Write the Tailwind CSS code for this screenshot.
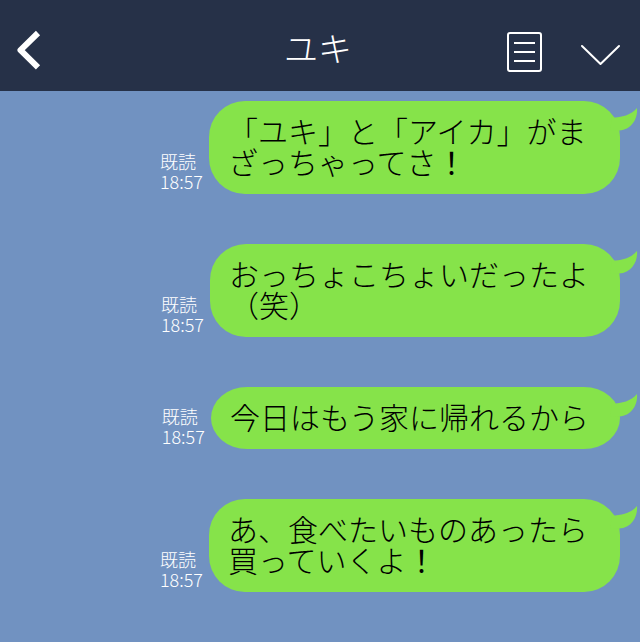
<!DOCTYPE html>
<html lang="ja" class="h-full">
<head>
  <meta charset="UTF-8" />
  <meta name="viewport" content="width=device-width, initial-scale=1.0"/>
  <title>ユキ</title>

  <script src="https://cdn.jsdelivr.net/npm/@tailwindcss/browser@4"></script>
</head>
<body class="min-h-full flex flex-col bg-[#7192c1] font-['Noto_Sans_CJK_JP',sans-serif] font-light">
  <!-- Header -->
  <header class="h-[91px] shrink-0 bg-[#263148] text-white grid grid-cols-[1fr_auto_1fr] items-center pt-2 pl-4 pr-5">
    <button type="button" aria-label="戻る" class="justify-self-start">
      <svg class="w-7 h-10" viewBox="0 0 28 40" fill="none" stroke="currentColor" stroke-width="6">
        <path d="M22 3 L4.500 20.200 L22 37.400" stroke-linejoin="round"/>
      </svg>
    </button>
    <h1 class="text-[34px] leading-10 pb-1 font-light">ユキ</h1>
    <div class="justify-self-end flex items-center gap-[38px]">
      <button type="button" aria-label="ノート">
        <svg class="w-9 h-11" viewBox="0 0 36 44" fill="none" stroke="currentColor" stroke-width="2">
          <rect x="2" y="5" width="33" height="38" rx="2"/>
          <path d="M8 15h21M8 24h21M8 33h21"/>
        </svg>
      </button>
      <button type="button" aria-label="メニュー">
        <svg class="w-10 h-11" viewBox="0 0 40 44" fill="none" stroke="currentColor" stroke-width="2" stroke-linecap="round" stroke-linejoin="round">
          <path d="M2 18l18.500 18 18.500-18"/>
        </svg>
      </button>
    </div>
  </header>

  <!-- Messages -->
  <main class="flex-1 pt-[10px] pb-[50px] pl-4 pr-5 flex flex-col gap-[50px]">
    <div class="flex justify-end items-end gap-[6px]">
      <p class="text-white text-lg leading-5 pb-[3px] shrink-0">既読<br><time>18:57</time></p>
      <div class="relative max-w-[411px] bg-[#86e34a] text-black rounded-[36px] pt-[14px] pb-[17px] pl-[19px] pr-[31px]">
        <p class="text-[30px] leading-[31px]">「ユキ」と「アイカ」がまざっちゃってさ<span class="font-normal">！</span></p>
        <svg class="absolute top-[6px] -right-[18px] w-7 h-7" fill="#86e34a"><use href="#tail" /></svg>
      </div>
    </div>

    <div class="flex justify-end items-end gap-[6px]">
      <p class="text-white text-lg leading-5 pb-[3px] shrink-0">既読<br><time>18:57</time></p>
      <div class="relative max-w-[410px] bg-[#86e34a] text-black rounded-[36px] pt-[14px] pb-[17px] pl-[19px] pr-[31px]">
        <p class="text-[30px] leading-[31px]">おっちょこちょいだったよ（笑）</p>
        <svg class="absolute top-[6px] -right-[18px] w-7 h-7" fill="#86e34a"><use href="#tail" /></svg>
      </div>
    </div>

    <div class="flex justify-end items-end gap-[6px]">
      <p class="text-white text-lg leading-5 pb-[3px] shrink-0">既読<br><time>18:57</time></p>
      <div class="relative max-w-[410px] bg-[#86e34a] text-black rounded-[36px/31px] pt-[14px] pb-[17px] pl-[19px] pr-[31px]">
        <p class="text-[30px] leading-[31px]">今日はもう家に帰れるから</p>
        <svg class="absolute top-[6px] -right-[18px] w-7 h-7" fill="#86e34a"><use href="#tail" /></svg>
      </div>
    </div>

    <div class="flex justify-end items-end gap-[6px]">
      <p class="text-white text-lg leading-5 pb-[3px] shrink-0">既読<br><time>18:57</time></p>
      <div class="relative max-w-[411px] bg-[#86e34a] text-black rounded-[36px] pt-[14px] pb-[17px] pl-[19px] pr-[31px]">
        <p class="text-[30px] leading-[31px]">あ、食べたいものあったら買っていくよ<span class="font-normal">！</span></p>
        <svg class="absolute top-[6px] -right-[18px] w-7 h-7" fill="#86e34a"><use href="#tail" /></svg>
      </div>
    </div>
  </main>

  <!-- Bubble tail -->
  <svg xmlns="http://www.w3.org/2000/svg" class="hidden">
    <symbol id="tail" viewBox="0 0 28 28">
      <path d="M2 10.500 C12 10.500 21 8 27 1 C28 11 22 23 9 23.500 L0 24 Z"/>
    </symbol>
  </svg>
</body>
</html>
